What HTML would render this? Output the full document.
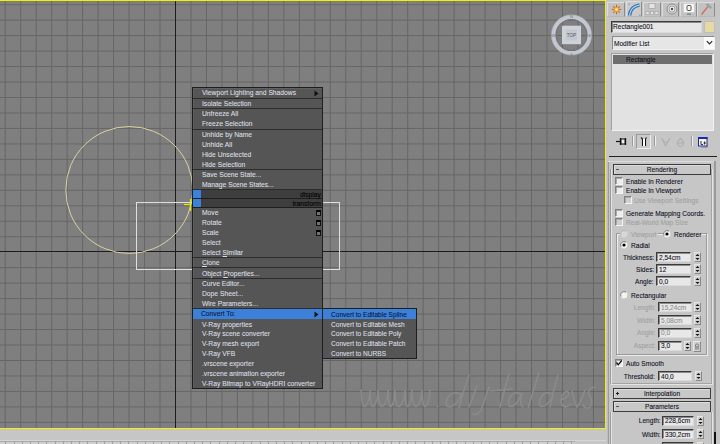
<!DOCTYPE html><html><head><meta charset="utf-8"><style>
*{margin:0;padding:0;box-sizing:border-box}
html,body{width:720px;height:444px;overflow:hidden;background:#c6c6c6}
body{position:relative;font-family:"Liberation Sans",sans-serif}
.a{position:absolute}
.t{position:absolute;white-space:pre;font-size:8px;line-height:10px;transform-origin:0 0;transform:scaleX(0.84);-webkit-text-stroke:0.1px currentColor}
.mt{color:#dcdfe2;-webkit-text-stroke:0.1px #dcdfe2}
.p{transform:scaleX(0.82)}
.sep{position:absolute;height:1px;background:#2c2c2c}
</style></head><body>

<svg class="a" style="left:0;top:0" width="605" height="428" viewBox="0 0 605 428">
<rect x="0" y="0" width="605" height="428" fill="#7f7f7f"/>
<line x1="5.22" y1="0" x2="5.22" y2="428" stroke="#676767" stroke-width="1"/>
<line x1="20.70" y1="0" x2="20.70" y2="428" stroke="#676767" stroke-width="1"/>
<line x1="36.18" y1="0" x2="36.18" y2="428" stroke="#676767" stroke-width="1"/>
<line x1="51.66" y1="0" x2="51.66" y2="428" stroke="#676767" stroke-width="1"/>
<line x1="67.14" y1="0" x2="67.14" y2="428" stroke="#676767" stroke-width="1"/>
<line x1="82.62" y1="0" x2="82.62" y2="428" stroke="#676767" stroke-width="1"/>
<line x1="98.10" y1="0" x2="98.10" y2="428" stroke="#676767" stroke-width="1"/>
<line x1="113.58" y1="0" x2="113.58" y2="428" stroke="#676767" stroke-width="1"/>
<line x1="129.06" y1="0" x2="129.06" y2="428" stroke="#676767" stroke-width="1"/>
<line x1="144.54" y1="0" x2="144.54" y2="428" stroke="#676767" stroke-width="1"/>
<line x1="160.02" y1="0" x2="160.02" y2="428" stroke="#676767" stroke-width="1"/>
<line x1="190.98" y1="0" x2="190.98" y2="428" stroke="#676767" stroke-width="1"/>
<line x1="206.46" y1="0" x2="206.46" y2="428" stroke="#676767" stroke-width="1"/>
<line x1="221.94" y1="0" x2="221.94" y2="428" stroke="#676767" stroke-width="1"/>
<line x1="237.42" y1="0" x2="237.42" y2="428" stroke="#676767" stroke-width="1"/>
<line x1="252.90" y1="0" x2="252.90" y2="428" stroke="#676767" stroke-width="1"/>
<line x1="268.38" y1="0" x2="268.38" y2="428" stroke="#676767" stroke-width="1"/>
<line x1="283.86" y1="0" x2="283.86" y2="428" stroke="#676767" stroke-width="1"/>
<line x1="299.34" y1="0" x2="299.34" y2="428" stroke="#676767" stroke-width="1"/>
<line x1="314.82" y1="0" x2="314.82" y2="428" stroke="#676767" stroke-width="1"/>
<line x1="330.30" y1="0" x2="330.30" y2="428" stroke="#676767" stroke-width="1"/>
<line x1="345.78" y1="0" x2="345.78" y2="428" stroke="#676767" stroke-width="1"/>
<line x1="361.26" y1="0" x2="361.26" y2="428" stroke="#676767" stroke-width="1"/>
<line x1="376.74" y1="0" x2="376.74" y2="428" stroke="#676767" stroke-width="1"/>
<line x1="392.22" y1="0" x2="392.22" y2="428" stroke="#676767" stroke-width="1"/>
<line x1="407.70" y1="0" x2="407.70" y2="428" stroke="#676767" stroke-width="1"/>
<line x1="423.18" y1="0" x2="423.18" y2="428" stroke="#676767" stroke-width="1"/>
<line x1="438.66" y1="0" x2="438.66" y2="428" stroke="#676767" stroke-width="1"/>
<line x1="454.14" y1="0" x2="454.14" y2="428" stroke="#676767" stroke-width="1"/>
<line x1="469.62" y1="0" x2="469.62" y2="428" stroke="#676767" stroke-width="1"/>
<line x1="485.10" y1="0" x2="485.10" y2="428" stroke="#676767" stroke-width="1"/>
<line x1="500.58" y1="0" x2="500.58" y2="428" stroke="#676767" stroke-width="1"/>
<line x1="516.06" y1="0" x2="516.06" y2="428" stroke="#676767" stroke-width="1"/>
<line x1="531.54" y1="0" x2="531.54" y2="428" stroke="#676767" stroke-width="1"/>
<line x1="547.02" y1="0" x2="547.02" y2="428" stroke="#676767" stroke-width="1"/>
<line x1="562.50" y1="0" x2="562.50" y2="428" stroke="#676767" stroke-width="1"/>
<line x1="577.98" y1="0" x2="577.98" y2="428" stroke="#676767" stroke-width="1"/>
<line x1="593.46" y1="0" x2="593.46" y2="428" stroke="#676767" stroke-width="1"/>
<line x1="0" y1="4.68" x2="605" y2="4.68" stroke="#676767" stroke-width="1"/>
<line x1="0" y1="20.15" x2="605" y2="20.15" stroke="#676767" stroke-width="1"/>
<line x1="0" y1="35.62" x2="605" y2="35.62" stroke="#676767" stroke-width="1"/>
<line x1="0" y1="51.09" x2="605" y2="51.09" stroke="#676767" stroke-width="1"/>
<line x1="0" y1="66.56" x2="605" y2="66.56" stroke="#676767" stroke-width="1"/>
<line x1="0" y1="82.03" x2="605" y2="82.03" stroke="#676767" stroke-width="1"/>
<line x1="0" y1="97.50" x2="605" y2="97.50" stroke="#676767" stroke-width="1"/>
<line x1="0" y1="112.97" x2="605" y2="112.97" stroke="#676767" stroke-width="1"/>
<line x1="0" y1="128.44" x2="605" y2="128.44" stroke="#676767" stroke-width="1"/>
<line x1="0" y1="143.91" x2="605" y2="143.91" stroke="#676767" stroke-width="1"/>
<line x1="0" y1="159.38" x2="605" y2="159.38" stroke="#676767" stroke-width="1"/>
<line x1="0" y1="174.85" x2="605" y2="174.85" stroke="#676767" stroke-width="1"/>
<line x1="0" y1="190.32" x2="605" y2="190.32" stroke="#676767" stroke-width="1"/>
<line x1="0" y1="205.79" x2="605" y2="205.79" stroke="#676767" stroke-width="1"/>
<line x1="0" y1="221.26" x2="605" y2="221.26" stroke="#676767" stroke-width="1"/>
<line x1="0" y1="236.73" x2="605" y2="236.73" stroke="#676767" stroke-width="1"/>
<line x1="0" y1="267.67" x2="605" y2="267.67" stroke="#676767" stroke-width="1"/>
<line x1="0" y1="283.14" x2="605" y2="283.14" stroke="#676767" stroke-width="1"/>
<line x1="0" y1="298.61" x2="605" y2="298.61" stroke="#676767" stroke-width="1"/>
<line x1="0" y1="314.08" x2="605" y2="314.08" stroke="#676767" stroke-width="1"/>
<line x1="0" y1="329.55" x2="605" y2="329.55" stroke="#676767" stroke-width="1"/>
<line x1="0" y1="345.02" x2="605" y2="345.02" stroke="#676767" stroke-width="1"/>
<line x1="0" y1="360.49" x2="605" y2="360.49" stroke="#676767" stroke-width="1"/>
<line x1="0" y1="375.96" x2="605" y2="375.96" stroke="#676767" stroke-width="1"/>
<line x1="0" y1="391.43" x2="605" y2="391.43" stroke="#676767" stroke-width="1"/>
<line x1="0" y1="406.90" x2="605" y2="406.90" stroke="#676767" stroke-width="1"/>
<line x1="0" y1="422.37" x2="605" y2="422.37" stroke="#676767" stroke-width="1"/>
<line x1="175.5" y1="0" x2="175.5" y2="428" stroke="#1c1c1c" stroke-width="1"/>
<line x1="0" y1="251.5" x2="605" y2="251.5" stroke="#1c1c1c" stroke-width="1"/>
<circle cx="129.3" cy="190" r="63.5" fill="none" stroke="#d9d1a0" stroke-width="1"/>
<rect x="136.5" y="202.5" width="203" height="67" fill="none" stroke="#dedede" stroke-width="1"/>
<line x1="190.5" y1="199" x2="190.5" y2="211" stroke="#e6e600" stroke-width="1.3"/>
<line x1="184" y1="204.5" x2="191" y2="204.5" stroke="#e6e600" stroke-width="1.3"/>
<g fill="none" stroke="#8b8b8b" stroke-width="1.5" stroke-linecap="round" opacity="1"><path d="M361 390 Q361.5 409 365.5 406 Q369.5 402 370 390 Q370.5 409 374.0 406 Q377.5 402 378 390 Q378.5 409 383.0 406 Q387.5 402 388 390 Q388.5 409 391.5 406 Q394.5 402 395 390 Q395.5 409 400.0 406 Q404.5 402 405 390 Q405.5 409 408.5 406 Q411.5 402 412 390 Q412.5 409 417.0 406 Q421.5 402 422 390 Q422.5 409 426.0 406 Q429.5 402 430 390"/><path d="M437 406.5 l1 0"/><path d="M461 394 Q452 390 447 399 Q444 407 450 407 Q457 405 462 394 M469 375 Q463 392 459 408"/><path d="M477 386 Q473 398 469 407 M478 378 l0.6 0"/><path d="M491 378 l0.6 0 M489 387 Q485 400 481 410 Q477 416 473 414"/><path d="M509 374 Q504 392 500 407 M490 391 Q500 390 512 389"/><path d="M521 394 Q512 390 509 400 Q507 408 513 406 Q518 403 522 393 Q519 404 523 407"/><path d="M539 373 Q533 392 528 408"/><path d="M552 394 Q543 390 540 400 Q538 408 544 406 Q550 403 553 395 M558 375 Q553 392 550 407"/><path d="M561 400 Q568 398 569 393 Q566 389 562 396 Q559 406 566 407 Q569 406 571 404"/><path d="M572 391 Q575 404 577 407 Q582 400 585 390"/><path d="M595 387 Q587 388 589 395 Q594 401 590 407 Q586 410 583 405"/></g>
</svg>
<div class="a" style="left:0;top:0;width:606px;height:1px;background:#f2f200"></div>
<div class="a" style="left:605px;top:0;width:1px;height:429px;background:#f2f200"></div>
<div class="a" style="left:0;top:428px;width:606px;height:1px;background:#f2f200"></div>
<svg class="a" style="left:546px;top:10px" width="52" height="52" viewBox="0 0 52 52">
<circle cx="25.5" cy="25" r="18.2" fill="none" stroke="#c3c7cf" stroke-width="4.2"/>
<circle cx="25.5" cy="25" r="20.2" fill="none" stroke="#9a9ea6" stroke-width="0.5"/>
<circle cx="25.5" cy="25" r="15.4" fill="none" stroke="#70747c" stroke-width="0.8"/>
<rect x="16" y="15.7" width="19" height="18.5" fill="#cdd1da"/>
<rect x="19.8" y="19.5" width="11.2" height="11" fill="#c3c7cf"/>
<text x="25.5" y="27" font-family="Liberation Sans" font-size="4.6" text-anchor="middle" fill="#5a5a5e">TOP</text>
<text x="25.5" y="8.3" font-family="Liberation Sans" font-size="4.2" text-anchor="middle" fill="#6e727a">N</text>
<text x="25.5" y="45.5" font-family="Liberation Sans" font-size="4.2" text-anchor="middle" fill="#6e727a">S</text>
<text x="7.2" y="26.5" font-family="Liberation Sans" font-size="4.2" text-anchor="middle" fill="#6e727a">W</text>
<text x="43.8" y="26.5" font-family="Liberation Sans" font-size="4.2" text-anchor="middle" fill="#6e727a">E</text>
</svg>
<div class="a" style="left:0;top:429px;width:606px;height:15px;background:#c6c6c6"></div>
<div class="a" style="left:0;top:440px;width:606px;height:1px;background:#d6d6d6"></div>
<div class="a" style="left:0;top:441px;width:575px;height:1px;background:#acacac"></div>
<div class="a" style="left:0;top:442px;width:575px;height:2px;background:#cfcfcf"></div>
<div class="a" style="left:5px;top:441px;width:1px;height:3px;background:#a0a0a0"></div><div class="a" style="left:14px;top:441px;width:1px;height:3px;background:#a0a0a0"></div><div class="a" style="left:22px;top:441px;width:1px;height:3px;background:#a0a0a0"></div><div class="a" style="left:30px;top:441px;width:1px;height:3px;background:#a0a0a0"></div><div class="a" style="left:38px;top:441px;width:1px;height:3px;background:#a0a0a0"></div><div class="a" style="left:46px;top:441px;width:1px;height:3px;background:#a0a0a0"></div><div class="a" style="left:55px;top:441px;width:1px;height:3px;background:#a0a0a0"></div><div class="a" style="left:63px;top:441px;width:1px;height:3px;background:#a0a0a0"></div><div class="a" style="left:71px;top:441px;width:1px;height:3px;background:#a0a0a0"></div><div class="a" style="left:79px;top:441px;width:1px;height:3px;background:#a0a0a0"></div><div class="a" style="left:87px;top:441px;width:1px;height:3px;background:#a0a0a0"></div><div class="a" style="left:96px;top:441px;width:1px;height:3px;background:#a0a0a0"></div><div class="a" style="left:104px;top:441px;width:1px;height:3px;background:#a0a0a0"></div><div class="a" style="left:112px;top:441px;width:1px;height:3px;background:#a0a0a0"></div><div class="a" style="left:120px;top:441px;width:1px;height:3px;background:#a0a0a0"></div><div class="a" style="left:128px;top:441px;width:1px;height:3px;background:#a0a0a0"></div><div class="a" style="left:137px;top:441px;width:1px;height:3px;background:#a0a0a0"></div><div class="a" style="left:145px;top:441px;width:1px;height:3px;background:#a0a0a0"></div><div class="a" style="left:153px;top:441px;width:1px;height:3px;background:#a0a0a0"></div><div class="a" style="left:161px;top:441px;width:1px;height:3px;background:#a0a0a0"></div><div class="a" style="left:169px;top:441px;width:1px;height:3px;background:#a0a0a0"></div><div class="a" style="left:178px;top:441px;width:1px;height:3px;background:#a0a0a0"></div><div class="a" style="left:186px;top:441px;width:1px;height:3px;background:#a0a0a0"></div><div class="a" style="left:194px;top:441px;width:1px;height:3px;background:#a0a0a0"></div><div class="a" style="left:202px;top:441px;width:1px;height:3px;background:#a0a0a0"></div><div class="a" style="left:210px;top:441px;width:1px;height:3px;background:#a0a0a0"></div><div class="a" style="left:219px;top:441px;width:1px;height:3px;background:#a0a0a0"></div><div class="a" style="left:227px;top:441px;width:1px;height:3px;background:#a0a0a0"></div><div class="a" style="left:235px;top:441px;width:1px;height:3px;background:#a0a0a0"></div><div class="a" style="left:243px;top:441px;width:1px;height:3px;background:#a0a0a0"></div><div class="a" style="left:251px;top:441px;width:1px;height:3px;background:#a0a0a0"></div><div class="a" style="left:260px;top:441px;width:1px;height:3px;background:#a0a0a0"></div><div class="a" style="left:268px;top:441px;width:1px;height:3px;background:#a0a0a0"></div><div class="a" style="left:276px;top:441px;width:1px;height:3px;background:#a0a0a0"></div><div class="a" style="left:284px;top:441px;width:1px;height:3px;background:#a0a0a0"></div><div class="a" style="left:292px;top:441px;width:1px;height:3px;background:#a0a0a0"></div><div class="a" style="left:301px;top:441px;width:1px;height:3px;background:#a0a0a0"></div><div class="a" style="left:309px;top:441px;width:1px;height:3px;background:#a0a0a0"></div><div class="a" style="left:317px;top:441px;width:1px;height:3px;background:#a0a0a0"></div><div class="a" style="left:325px;top:441px;width:1px;height:3px;background:#a0a0a0"></div><div class="a" style="left:333px;top:441px;width:1px;height:3px;background:#a0a0a0"></div><div class="a" style="left:342px;top:441px;width:1px;height:3px;background:#a0a0a0"></div><div class="a" style="left:350px;top:441px;width:1px;height:3px;background:#a0a0a0"></div><div class="a" style="left:358px;top:441px;width:1px;height:3px;background:#a0a0a0"></div><div class="a" style="left:366px;top:441px;width:1px;height:3px;background:#a0a0a0"></div><div class="a" style="left:374px;top:441px;width:1px;height:3px;background:#a0a0a0"></div><div class="a" style="left:383px;top:441px;width:1px;height:3px;background:#a0a0a0"></div><div class="a" style="left:391px;top:441px;width:1px;height:3px;background:#a0a0a0"></div><div class="a" style="left:399px;top:441px;width:1px;height:3px;background:#a0a0a0"></div><div class="a" style="left:407px;top:441px;width:1px;height:3px;background:#a0a0a0"></div><div class="a" style="left:415px;top:441px;width:1px;height:3px;background:#a0a0a0"></div><div class="a" style="left:424px;top:441px;width:1px;height:3px;background:#a0a0a0"></div><div class="a" style="left:432px;top:441px;width:1px;height:3px;background:#a0a0a0"></div><div class="a" style="left:440px;top:441px;width:1px;height:3px;background:#a0a0a0"></div><div class="a" style="left:448px;top:441px;width:1px;height:3px;background:#a0a0a0"></div><div class="a" style="left:456px;top:441px;width:1px;height:3px;background:#a0a0a0"></div><div class="a" style="left:465px;top:441px;width:1px;height:3px;background:#a0a0a0"></div><div class="a" style="left:473px;top:441px;width:1px;height:3px;background:#a0a0a0"></div><div class="a" style="left:481px;top:441px;width:1px;height:3px;background:#a0a0a0"></div><div class="a" style="left:489px;top:441px;width:1px;height:3px;background:#a0a0a0"></div><div class="a" style="left:497px;top:441px;width:1px;height:3px;background:#a0a0a0"></div><div class="a" style="left:506px;top:441px;width:1px;height:3px;background:#a0a0a0"></div><div class="a" style="left:514px;top:441px;width:1px;height:3px;background:#a0a0a0"></div><div class="a" style="left:522px;top:441px;width:1px;height:3px;background:#a0a0a0"></div><div class="a" style="left:530px;top:441px;width:1px;height:3px;background:#a0a0a0"></div><div class="a" style="left:538px;top:441px;width:1px;height:3px;background:#a0a0a0"></div><div class="a" style="left:547px;top:441px;width:1px;height:3px;background:#a0a0a0"></div><div class="a" style="left:555px;top:441px;width:1px;height:3px;background:#a0a0a0"></div><div class="a" style="left:563px;top:441px;width:1px;height:3px;background:#a0a0a0"></div><div class="a" style="left:571px;top:441px;width:1px;height:3px;background:#a0a0a0"></div>
<div class="a" style="left:192px;top:87px;width:131px;height:302px;background:#555555;border:1px solid #1e1e1e;box-shadow:inset 1px 1px 0 #616161"></div>
<div class="t mt" style="left:201.5px;top:88px">Viewport Lighting and Shadows</div>
<div class="t mt" style="left:201.5px;top:99px">Isolate Selection</div>
<div class="t mt" style="left:201.5px;top:109px">Unfreeze All</div>
<div class="t mt" style="left:201.5px;top:119px">Freeze Selection</div>
<div class="t mt" style="left:201.5px;top:130px">Unhide by Name</div>
<div class="t mt" style="left:201.5px;top:140px">Unhide All</div>
<div class="t mt" style="left:201.5px;top:150px">Hide Unselected</div>
<div class="t mt" style="left:201.5px;top:160px">Hide Selection</div>
<div class="t mt" style="left:201.5px;top:170px">Save Scene State...</div>
<div class="t mt" style="left:201.5px;top:180px">Manage Scene States...</div>
<div class="t mt" style="left:201.5px;top:208px">Move</div>
<div class="t mt" style="left:201.5px;top:218px">Rotate</div>
<div class="t mt" style="left:201.5px;top:228px">Scale</div>
<div class="t mt" style="left:201.5px;top:238px">Select</div>
<div class="t mt" style="left:201.5px;top:248px">Select <u>S</u>imilar</div>
<div class="t mt" style="left:201.5px;top:258px"><u>C</u>lone</div>
<div class="t mt" style="left:201.5px;top:269px">Object <u>P</u>roperties...</div>
<div class="t mt" style="left:201.5px;top:279px">Curve Editor...</div>
<div class="t mt" style="left:201.5px;top:289px">Dope Sheet...</div>
<div class="t mt" style="left:201.5px;top:299px">Wire Parameters...</div>
<div class="t mt" style="left:201.5px;top:320px">V-Ray properties</div>
<div class="t mt" style="left:201.5px;top:329px">V-Ray scene converter</div>
<div class="t mt" style="left:201.5px;top:339px">V-Ray mesh export</div>
<div class="t mt" style="left:201.5px;top:349px">V-Ray VFB</div>
<div class="t mt" style="left:201.5px;top:359px">.vrscene exporter</div>
<div class="t mt" style="left:201.5px;top:369px">.vrscene animation exporter</div>
<div class="t mt" style="left:201.5px;top:379px">V-Ray Bitmap to VRayHDRI converter</div>
<div class="sep" style="left:193px;top:98px;width:129px"></div>
<div class="sep" style="left:193px;top:108px;width:129px"></div>
<div class="sep" style="left:193px;top:129px;width:129px"></div>
<div class="sep" style="left:193px;top:169px;width:129px"></div>
<div class="sep" style="left:193px;top:257px;width:129px"></div>
<div class="sep" style="left:193px;top:267px;width:129px"></div>
<div class="sep" style="left:193px;top:278px;width:129px"></div>
<div class="sep" style="left:193px;top:308px;width:129px"></div>
<div class="a" style="left:193px;top:189px;width:129px;height:19px;background:#3e3e3e"></div>
<div class="sep" style="left:193px;top:189px;width:129px"></div>
<div class="sep" style="left:193px;top:198px;width:129px;background:#1e1e1e"></div>
<div class="sep" style="left:193px;top:207px;width:129px;background:#1e1e1e"></div>
<div class="a" style="left:193px;top:190px;width:8px;height:8px;background:#3b82dc"></div>
<div class="a" style="left:193px;top:199px;width:8px;height:8px;background:#3b82dc"></div>
<div class="t" style="right:399px;top:190px;color:#000;transform-origin:100% 0">display</div>
<div class="t" style="right:399px;top:199px;color:#000;transform-origin:100% 0">transform</div>
<div class="a" style="left:316px;top:210px;width:5px;height:6px;border:1px solid #111;border-top:2px solid #000;background:#707070"></div>
<div class="a" style="left:316px;top:220px;width:5px;height:6px;border:1px solid #111;border-top:2px solid #000;background:#707070"></div>
<div class="a" style="left:316px;top:230px;width:5px;height:6px;border:1px solid #111;border-top:2px solid #000;background:#707070"></div>
<div class="a" style="left:193px;top:309px;width:129px;height:10px;background:#3b80d9"></div>
<div class="t" style="left:201px;top:309px;color:#0b1a3a">Convert To:</div>
<svg class="a" style="left:314px;top:311px" width="5" height="7"><path d="M0.5 0.5 L4.5 3.5 L0.5 6.5 Z" fill="#111"/></svg>
<svg class="a" style="left:314px;top:90px" width="5" height="7"><path d="M0.5 0.5 L4.5 3.5 L0.5 6.5 Z" fill="#111"/></svg>
<div class="a" style="left:322px;top:308px;width:95px;height:51px;background:#555555;border:1px solid #1e1e1e"></div>
<div class="a" style="left:323px;top:309px;width:93px;height:10px;background:#3b80d9"></div>
<div class="t p" style="left:331px;top:310px;color:#0b1a3a">Convert to Editable Spline</div>
<div class="t mt p" style="left:331px;top:320px;">Convert to Editable Mesh</div>
<div class="t mt p" style="left:331px;top:329px;">Convert to Editable Poly</div>
<div class="t mt p" style="left:331px;top:339px;">Convert to Editable Patch</div>
<div class="t mt p" style="left:331px;top:349px;">Convert to NURBS</div>
<div class="a" style="left:606px;top:0;width:114px;height:444px;background:#c6c6c6"></div>
<div class="a" style="left:607px;top:2px;width:18px;height:15px;background:#c2c2c2;border-top:1px solid #dcdcdc;border-left:1px solid #dcdcdc;border-right:1px solid #8c8c8c;border-bottom:1px solid #b8b8b8"></div>
<div class="a" style="left:626px;top:1px;width:16px;height:16px;background:#cbcbcb;border-top:1px solid #dcdcdc;border-left:1px solid #dcdcdc;border-right:1px solid #8c8c8c;border-bottom:1px solid #b8b8b8"></div>
<div class="a" style="left:643px;top:2px;width:18px;height:15px;background:#c2c2c2;border-top:1px solid #dcdcdc;border-left:1px solid #dcdcdc;border-right:1px solid #8c8c8c;border-bottom:1px solid #b8b8b8"></div>
<div class="a" style="left:662px;top:2px;width:17px;height:15px;background:#c2c2c2;border-top:1px solid #dcdcdc;border-left:1px solid #dcdcdc;border-right:1px solid #8c8c8c;border-bottom:1px solid #b8b8b8"></div>
<div class="a" style="left:680px;top:2px;width:17px;height:15px;background:#c2c2c2;border-top:1px solid #dcdcdc;border-left:1px solid #dcdcdc;border-right:1px solid #8c8c8c;border-bottom:1px solid #b8b8b8"></div>
<div class="a" style="left:697px;top:2px;width:18px;height:15px;background:#c2c2c2;border-top:1px solid #dcdcdc;border-left:1px solid #dcdcdc;border-right:1px solid #8c8c8c;border-bottom:1px solid #b8b8b8"></div>
<svg class="a" style="left:610px;top:3px" width="13" height="13"><g stroke="#c85a30" stroke-width="1.1"><line x1="6.5" y1="1.8" x2="6.5" y2="11.2"/><line x1="1.8" y1="6.5" x2="11.2" y2="6.5"/><line x1="3.3" y1="3.3" x2="9.7" y2="9.7"/><line x1="9.7" y1="3.3" x2="3.3" y2="9.7"/></g><circle cx="6.5" cy="6.5" r="2.8" fill="#f0a020"/><circle cx="6.5" cy="6.5" r="1.3" fill="#fff8c8"/></svg>
<svg class="a" style="left:627px;top:2px" width="15" height="15"><rect x="1.5" y="1.5" width="1.5" height="1.5" fill="#9aa"/><rect x="12" y="12.5" width="1.5" height="1.5" fill="#9aa"/><path d="M2.5 13.5 Q3.5 4.5 12.5 3" fill="none" stroke="#3a78b8" stroke-width="3.6"/><path d="M2.5 13.5 Q3.5 4.5 12.5 3" fill="none" stroke="#b8dcf4" stroke-width="1.1"/></svg>
<svg class="a" style="left:645px;top:2px" width="14" height="14"><rect x="4" y="1.5" width="6" height="5" fill="#e4e4e4" stroke="#a8a8a8" stroke-width="0.8"/><rect x="1" y="9.5" width="3" height="3" fill="#e4e4e4" stroke="#a8a8a8" stroke-width="0.7"/><rect x="5.5" y="9.5" width="3" height="3" fill="#e4e4e4" stroke="#a8a8a8" stroke-width="0.7"/><rect x="10" y="9.5" width="3" height="3" fill="#e4e4e4" stroke="#a8a8a8" stroke-width="0.7"/></svg>
<svg class="a" style="left:665px;top:2px" width="14" height="14"><circle cx="7" cy="7" r="5" fill="#dcdcdc" stroke="#8a8a8a" stroke-width="1"/><circle cx="7" cy="7" r="3" fill="#f4f4f4" stroke="#8a8a8a" stroke-width="0.8"/><circle cx="7" cy="7" r="1.2" fill="#444"/></svg>
<svg class="a" style="left:682px;top:2px" width="14" height="14"><rect x="1.5" y="1.5" width="11" height="9" fill="#f6f6f6" stroke="#cfcfcf" stroke-width="0.8"/><rect x="5" y="3.5" width="4" height="5" rx="1" fill="none" stroke="#555" stroke-width="1"/><rect x="5" y="11.5" width="4" height="1.2" fill="#6a7a8a"/></svg>
<svg class="a" style="left:699px;top:2px" width="14" height="14"><line x1="2.5" y1="12.5" x2="9" y2="4.5" stroke="#d07050" stroke-width="1.3"/><path d="M6.5 2.5 L9 1.2 L13 5 L11.5 7 L8.5 4.5Z" fill="#9aa2aa"/></svg>
<div class="a" style="left:611px;top:21px;width:91px;height:12px;background:#e6e6e6;border-top:1px solid #3a3a3a;border-left:1px solid #3a3a3a;border-right:1px solid #dadada;border-bottom:1px solid #dadada;box-shadow:inset 1px 1px 0 #8c8c8c"></div>
<div class="t p" style="left:613px;top:22px;color:#0e0e24">Rectangle001</div>
<div class="a" style="left:704px;top:21px;width:11px;height:12px;background:#e6d9a2;border:1px solid #bdbdbd"></div>
<div class="a" style="left:612px;top:36px;width:103px;height:14px;background:#e6e6e6;border-top:1px solid #8a8a8a;border-left:1px solid #8a8a8a;border-bottom:1px solid #f0f0f0;border-right:1px solid #f0f0f0"></div>
<div class="a" style="left:704px;top:37px;width:10px;height:12px;background:#fafafa;"></div>
<svg class="a" style="left:706px;top:40px" width="7" height="6"><path d="M0.8 1.2 L3.5 4 L6.2 1.2" fill="none" stroke="#222" stroke-width="1.1"/></svg>
<div class="t p" style="left:614px;top:39px;color:#0e0e24">Modifier List</div>
<div class="a" style="left:611px;top:53px;width:103px;height:78px;background:#e2e2e2;border-top:1px solid #a0a0a0;border-left:1px solid #a0a0a0;border-bottom:1px solid #f2f2f2;border-right:1px solid #f2f2f2"></div>
<div class="a" style="left:613px;top:55px;width:99px;height:9px;background:#6e6e6e;"></div>
<div class="t p" style="left:626px;top:55px;color:#101020">Rectangle</div>
<svg class="a" style="left:614px;top:136px" width="14" height="12"><path d="M2 5.5 H6.5" stroke="#111" stroke-width="1.2"/><path d="M6.5 2 V9 M11.5 2 V9" stroke="#111" stroke-width="1.3"/><rect x="7" y="3" width="4" height="5" fill="#f0f0f0" stroke="#111" stroke-width="1"/></svg>
<div class="a" style="left:632px;top:136px;width:1px;height:10px;background:#9a9a9a;"></div>
<div class="a" style="left:633px;top:136px;width:1px;height:10px;background:#eeeeee;"></div>
<div class="a" style="left:636px;top:134px;width:15px;height:15px;background:#c9c9c9;border-top:1px solid #9a9a9a;border-left:1px solid #9a9a9a;border-right:1px solid #ececec;border-bottom:1px solid #ececec"></div>
<svg class="a" style="left:640px;top:137px" width="8" height="10"><path d="M1 0.5 L2.5 2 V9 M6.5 0.5 L5.5 2 V9" fill="none" stroke="#111" stroke-width="1.1"/><rect x="3" y="2" width="2" height="7" fill="#fff"/></svg>
<div class="a" style="left:654px;top:136px;width:1px;height:10px;background:#9a9a9a;"></div>
<div class="a" style="left:655px;top:136px;width:1px;height:10px;background:#eeeeee;"></div>
<svg class="a" style="left:660px;top:136px" width="26" height="12"><path d="M1.5 2 L5.5 10 L10 2 M3.5 4.5 L5.5 7 L8 4.5" fill="none" stroke="#a6a6a6" stroke-width="0.9"/><ellipse cx="20.5" cy="7" rx="3" ry="3.5" fill="none" stroke="#a6a6a6" stroke-width="0.9"/><path d="M18.5 7 H22.5 M19 3.5 Q20.5 1 22 3.5" fill="none" stroke="#a6a6a6" stroke-width="0.9"/></svg>
<div class="a" style="left:691px;top:136px;width:1px;height:10px;background:#9a9a9a;"></div>
<div class="a" style="left:692px;top:136px;width:1px;height:10px;background:#eeeeee;"></div>
<svg class="a" style="left:697px;top:136px" width="12" height="12"><rect x="1.5" y="1.5" width="8.5" height="8.5" fill="#f4f4f4" stroke="#1828b8" stroke-width="1"/><rect x="1" y="1" width="9.5" height="2" fill="#1828b8"/><path d="M4 5 V8.5 H6 M7.5 5.5 V8.5 M6.5 7 H9" fill="none" stroke="#333" stroke-width="1"/><path d="M10.5 5 V11 H4" fill="none" stroke="#777" stroke-width="1"/></svg>
<div class="a" style="left:609px;top:156px;width:108px;height:1px;background:#222;"></div>
<div class="a" style="left:608px;top:161px;width:107px;height:1px;background:#dcdcdc;"></div>
<div class="a" style="left:607px;top:162px;width:1px;height:282px;background:#bdbdbd;"></div>
<div class="a" style="left:608px;top:162px;width:1px;height:282px;background:#9c9c9c;"></div>
<div class="a" style="left:610px;top:169px;width:103px;height:216px;border-left:1px solid #9c9c9c;border-bottom:1px solid #e4e4e4;border-right:1px solid #e4e4e4;box-shadow:inset 1px 0 0 #e4e4e4, inset -1px -1px 0 #a4a4a4"></div>
<div class="a" style="left:613px;top:164px;width:98px;height:11px;background:#c8c8c8;border:1px solid #3c3c3c;box-shadow:inset 1px 1px 0 #dcdcdc"></div>
<div class="t" style="left:662px;top:165px;color:#0e0e24;transform:scaleX(0.82) translateX(-50%);transform-origin:0 0">Rendering</div>
<div class="a" style="left:616px;top:169px;width:3px;height:1px;background:#555;"></div>
<div class="a" style="left:615px;top:177px;width:8px;height:8px;background:#ececec;border-top:1px solid #808080;border-left:1px solid #808080;border-right:1px solid #f4f4f4;border-bottom:1px solid #f4f4f4;box-shadow:inset 1px 1px 0 #a8a8a8"></div>
<div class="t p" style="left:626px;top:177px;color:#0e0e24">Enable In Renderer</div>
<div class="a" style="left:615px;top:186px;width:8px;height:8px;background:#ececec;border-top:1px solid #808080;border-left:1px solid #808080;border-right:1px solid #f4f4f4;border-bottom:1px solid #f4f4f4;box-shadow:inset 1px 1px 0 #a8a8a8"></div>
<div class="t p" style="left:626px;top:186px;color:#0e0e24">Enable In Viewport</div>
<div class="a" style="left:624px;top:196px;width:8px;height:8px;background:#cfcfcf;border-top:1px solid #808080;border-left:1px solid #808080;border-right:1px solid #f4f4f4;border-bottom:1px solid #f4f4f4;box-shadow:inset 1px 1px 0 #a8a8a8"></div>
<div class="t p" style="left:634px;top:196px;color:#a0a0a0">Use Viewport Settings</div>
<div class="a" style="left:615px;top:209px;width:8px;height:8px;background:#ececec;border-top:1px solid #808080;border-left:1px solid #808080;border-right:1px solid #f4f4f4;border-bottom:1px solid #f4f4f4;box-shadow:inset 1px 1px 0 #a8a8a8"></div>
<div class="t p" style="left:626px;top:209px;color:#0e0e24">Generate Mapping Coords.</div>
<div class="a" style="left:615px;top:218px;width:8px;height:8px;background:#cfcfcf;border-top:1px solid #808080;border-left:1px solid #808080;border-right:1px solid #f4f4f4;border-bottom:1px solid #f4f4f4;box-shadow:inset 1px 1px 0 #a8a8a8"></div>
<div class="t p" style="left:626px;top:218px;color:#a0a0a0">Real-World Map Size</div>
<div class="a" style="left:616px;top:233px;width:91px;height:122px;border:1px solid #9a9a9a;box-shadow:1px 1px 0 #ececec inset, 1px 1px 0 #ececec"></div>
<div class="a" style="left:620px;top:228px;width:38px;height:10px;background:#c6c6c6;"></div>
<div class="a" style="left:663px;top:228px;width:39px;height:10px;background:#c6c6c6;"></div>
<svg class="a" style="left:620px;top:230px" width="8" height="8"><circle cx="4" cy="4" r="3.4" fill="#d8d8d8"/><path d="M1 5.5 A3.4 3.4 0 0 1 6 1.2" fill="none" stroke="#b4b4b4" stroke-width="1"/></svg>
<div class="t p" style="left:631px;top:230px;color:#a0a0a0">Viewport</div>
<svg class="a" style="left:663px;top:230px" width="8" height="8"><circle cx="4" cy="4" r="3.4" fill="#f2f2f2"/><path d="M1 5.5 A3.4 3.4 0 0 1 6 1.2" fill="none" stroke="#7a7a7a" stroke-width="1"/><circle cx="4" cy="4" r="1.6" fill="#000"/></svg>
<div class="t p" style="left:674px;top:230px;color:#0e0e24">Renderer</div>
<svg class="a" style="left:620px;top:241px" width="8" height="8"><circle cx="4" cy="4" r="3.4" fill="#f2f2f2"/><path d="M1 5.5 A3.4 3.4 0 0 1 6 1.2" fill="none" stroke="#7a7a7a" stroke-width="1"/><circle cx="4" cy="4" r="1.6" fill="#000"/></svg>
<div class="t p" style="left:631px;top:241px;color:#0e0e24">Radial</div>
<div class="t p" style="right:66px;top:253px;color:#0e0e24;transform-origin:100% 0">Thickness:</div>
<div class="a" style="left:656px;top:252px;width:35px;height:10px;background:#e8e8e8;border-top:1px solid #3a3a3a;border-left:1px solid #3a3a3a;border-right:1px solid #dadada;border-bottom:1px solid #dadada;box-shadow:inset 1px 1px 0 #8c8c8c"></div>
<div class="t p" style="left:658.5px;top:253px;color:#0e0e24">2,54cm</div>
<div class="a" style="left:694px;top:252px;width:7px;height:10px;background:#d0d0d0;border-right:1px solid #8a8a8a;border-bottom:1px solid #8a8a8a;border-top:1px solid #e6e6e6;border-left:1px solid #e6e6e6"></div>
<svg class="a" style="left:694px;top:252px" width="7" height="10"><path d="M1.5 4 L3.5 2 L5.5 4Z M1.5 6 L3.5 8 L5.5 6Z" fill="#111"/></svg>
<div class="t p" style="right:66px;top:265px;color:#0e0e24;transform-origin:100% 0">Sides:</div>
<div class="a" style="left:656px;top:264px;width:35px;height:10px;background:#e8e8e8;border-top:1px solid #3a3a3a;border-left:1px solid #3a3a3a;border-right:1px solid #dadada;border-bottom:1px solid #dadada;box-shadow:inset 1px 1px 0 #8c8c8c"></div>
<div class="t p" style="left:658.5px;top:265px;color:#0e0e24">12</div>
<div class="a" style="left:694px;top:264px;width:7px;height:10px;background:#d0d0d0;border-right:1px solid #8a8a8a;border-bottom:1px solid #8a8a8a;border-top:1px solid #e6e6e6;border-left:1px solid #e6e6e6"></div>
<svg class="a" style="left:694px;top:264px" width="7" height="10"><path d="M1.5 4 L3.5 2 L5.5 4Z M1.5 6 L3.5 8 L5.5 6Z" fill="#111"/></svg>
<div class="t p" style="right:66px;top:277px;color:#0e0e24;transform-origin:100% 0">Angle:</div>
<div class="a" style="left:656px;top:276px;width:35px;height:10px;background:#e8e8e8;border-top:1px solid #3a3a3a;border-left:1px solid #3a3a3a;border-right:1px solid #dadada;border-bottom:1px solid #dadada;box-shadow:inset 1px 1px 0 #8c8c8c"></div>
<div class="t p" style="left:658.5px;top:277px;color:#0e0e24">0,0</div>
<div class="a" style="left:694px;top:276px;width:7px;height:10px;background:#d0d0d0;border-right:1px solid #8a8a8a;border-bottom:1px solid #8a8a8a;border-top:1px solid #e6e6e6;border-left:1px solid #e6e6e6"></div>
<svg class="a" style="left:694px;top:276px" width="7" height="10"><path d="M1.5 4 L3.5 2 L5.5 4Z M1.5 6 L3.5 8 L5.5 6Z" fill="#111"/></svg>
<svg class="a" style="left:620px;top:291px" width="8" height="8"><circle cx="4" cy="4" r="3.4" fill="#f2f2f2"/><path d="M1 5.5 A3.4 3.4 0 0 1 6 1.2" fill="none" stroke="#7a7a7a" stroke-width="1"/></svg>
<div class="t p" style="left:631px;top:291px;color:#0e0e24">Rectangular</div>
<div class="t p" style="right:64px;top:303px;color:#a0a0a0;transform-origin:100% 0">Length:</div>
<div class="a" style="left:658px;top:302px;width:34px;height:10px;background:#e8e8e8;border-top:1px solid #3a3a3a;border-left:1px solid #3a3a3a;border-right:1px solid #dadada;border-bottom:1px solid #dadada;box-shadow:inset 1px 1px 0 #8c8c8c"></div>
<div class="t p" style="left:660.5px;top:303px;color:#8e8e8e">15,24cm</div>
<div class="a" style="left:694px;top:302px;width:7px;height:10px;background:#d0d0d0;border-right:1px solid #8a8a8a;border-bottom:1px solid #8a8a8a;border-top:1px solid #e6e6e6;border-left:1px solid #e6e6e6"></div>
<svg class="a" style="left:694px;top:302px" width="7" height="10"><path d="M1.5 4 L3.5 2 L5.5 4Z M1.5 6 L3.5 8 L5.5 6Z" fill="#111"/></svg>
<div class="t p" style="right:64px;top:316px;color:#a0a0a0;transform-origin:100% 0">Width:</div>
<div class="a" style="left:658px;top:315px;width:34px;height:10px;background:#e8e8e8;border-top:1px solid #3a3a3a;border-left:1px solid #3a3a3a;border-right:1px solid #dadada;border-bottom:1px solid #dadada;box-shadow:inset 1px 1px 0 #8c8c8c"></div>
<div class="t p" style="left:660.5px;top:316px;color:#8e8e8e">5,08cm</div>
<div class="a" style="left:694px;top:315px;width:7px;height:10px;background:#d0d0d0;border-right:1px solid #8a8a8a;border-bottom:1px solid #8a8a8a;border-top:1px solid #e6e6e6;border-left:1px solid #e6e6e6"></div>
<svg class="a" style="left:694px;top:315px" width="7" height="10"><path d="M1.5 4 L3.5 2 L5.5 4Z M1.5 6 L3.5 8 L5.5 6Z" fill="#111"/></svg>
<div class="t p" style="right:64px;top:328px;color:#a0a0a0;transform-origin:100% 0">Angle:</div>
<div class="a" style="left:658px;top:328px;width:34px;height:10px;background:#e8e8e8;border-top:1px solid #3a3a3a;border-left:1px solid #3a3a3a;border-right:1px solid #dadada;border-bottom:1px solid #dadada;box-shadow:inset 1px 1px 0 #8c8c8c"></div>
<div class="t p" style="left:660.5px;top:328px;color:#8e8e8e">0,0</div>
<div class="a" style="left:694px;top:328px;width:7px;height:10px;background:#d0d0d0;border-right:1px solid #8a8a8a;border-bottom:1px solid #8a8a8a;border-top:1px solid #e6e6e6;border-left:1px solid #e6e6e6"></div>
<svg class="a" style="left:694px;top:328px" width="7" height="10"><path d="M1.5 4 L3.5 2 L5.5 4Z M1.5 6 L3.5 8 L5.5 6Z" fill="#111"/></svg>
<div class="t p" style="right:64px;top:341px;color:#a0a0a0;transform-origin:100% 0">Aspect:</div>
<div class="a" style="left:658px;top:341px;width:24px;height:10px;background:#e8e8e8;border-top:1px solid #3a3a3a;border-left:1px solid #3a3a3a;border-right:1px solid #dadada;border-bottom:1px solid #dadada;box-shadow:inset 1px 1px 0 #8c8c8c"></div>
<div class="t p" style="left:660.5px;top:341px;color:#0e0e24">3,0</div>
<div class="a" style="left:684px;top:341px;width:7px;height:10px;background:#d0d0d0;border-right:1px solid #8a8a8a;border-bottom:1px solid #8a8a8a;border-top:1px solid #e6e6e6;border-left:1px solid #e6e6e6"></div>
<svg class="a" style="left:684px;top:341px" width="7" height="10"><path d="M1.5 4 L3.5 2 L5.5 4Z M1.5 6 L3.5 8 L5.5 6Z" fill="#111"/></svg>
<div class="a" style="left:693px;top:341px;width:8px;height:11px;background:#cdcdcd;border-top:1px solid #e8e8e8;border-left:1px solid #e8e8e8;border-right:1px solid #8a8a8a;border-bottom:1px solid #8a8a8a"></div>
<svg class="a" style="left:694px;top:342px" width="6" height="9"><path d="M1.5 4 V2.8 Q3 0.8 4.5 2.8 V4" fill="none" stroke="#777" stroke-width="0.9"/><rect x="1" y="4" width="4" height="3.5" fill="#999"/></svg>
<div class="a" style="left:615px;top:359px;width:8px;height:8px;background:#ececec;border-top:1px solid #808080;border-left:1px solid #808080;border-right:1px solid #f4f4f4;border-bottom:1px solid #f4f4f4;box-shadow:inset 1px 1px 0 #a8a8a8"></div>
<svg class="a" style="left:615px;top:359px" width="8" height="8"><path d="M1.5 3.5 L3.2 5.8 L6.8 1.5" fill="none" stroke="#111" stroke-width="1.3"/></svg>
<div class="t p" style="left:626px;top:359px;color:#0e0e24">Auto Smooth</div>
<div class="t p" style="right:65px;top:372px;color:#0e0e24;transform-origin:100% 0">Threshold:</div>
<div class="a" style="left:658px;top:371px;width:34px;height:10px;background:#e8e8e8;border-top:1px solid #3a3a3a;border-left:1px solid #3a3a3a;border-right:1px solid #dadada;border-bottom:1px solid #dadada;box-shadow:inset 1px 1px 0 #8c8c8c"></div>
<div class="t p" style="left:660.5px;top:372px;color:#0e0e24">40,0</div>
<div class="a" style="left:695px;top:371px;width:7px;height:10px;background:#d0d0d0;border-right:1px solid #8a8a8a;border-bottom:1px solid #8a8a8a;border-top:1px solid #e6e6e6;border-left:1px solid #e6e6e6"></div>
<svg class="a" style="left:695px;top:371px" width="7" height="10"><path d="M1.5 4 L3.5 2 L5.5 4Z M1.5 6 L3.5 8 L5.5 6Z" fill="#111"/></svg>
<div class="a" style="left:613px;top:388px;width:98px;height:11px;background:#c8c8c8;border:1px solid #3c3c3c;box-shadow:inset 1px 1px 0 #dcdcdc"></div>
<div class="t" style="left:662px;top:389px;color:#0e0e24;transform:scaleX(0.82) translateX(-50%);transform-origin:0 0">Interpolation</div>
<div class="a" style="left:616px;top:393px;width:3px;height:1px;background:#222;"></div>
<div class="a" style="left:617px;top:392px;width:1px;height:3px;background:#222;"></div>
<div class="a" style="left:613px;top:401px;width:98px;height:11px;background:#c8c8c8;border:1px solid #3c3c3c;box-shadow:inset 1px 1px 0 #dcdcdc"></div>
<div class="t" style="left:662px;top:402px;color:#0e0e24;transform:scaleX(0.82) translateX(-50%);transform-origin:0 0">Parameters</div>
<div class="a" style="left:616px;top:406px;width:3px;height:1px;background:#555;"></div>
<div class="a" style="left:610px;top:412px;width:103px;height:40px;border-left:1px solid #9c9c9c;border-right:1px solid #e4e4e4;box-shadow:inset 1px 0 0 #e4e4e4, inset -1px 0 0 #a4a4a4"></div>
<div class="t p" style="right:59px;top:416px;color:#0e0e24;transform-origin:100% 0">Length:</div>
<div class="a" style="left:662px;top:416px;width:32px;height:10px;background:#e8e8e8;border-top:1px solid #3a3a3a;border-left:1px solid #3a3a3a;border-right:1px solid #dadada;border-bottom:1px solid #dadada;box-shadow:inset 1px 1px 0 #8c8c8c"></div>
<div class="t p" style="left:664.5px;top:416px;color:#0e0e24">228,6cm</div>
<div class="a" style="left:697px;top:416px;width:7px;height:10px;background:#d0d0d0;border-right:1px solid #8a8a8a;border-bottom:1px solid #8a8a8a;border-top:1px solid #e6e6e6;border-left:1px solid #e6e6e6"></div>
<svg class="a" style="left:697px;top:416px" width="7" height="10"><path d="M1.5 4 L3.5 2 L5.5 4Z M1.5 6 L3.5 8 L5.5 6Z" fill="#111"/></svg>
<div class="t p" style="right:59px;top:430px;color:#0e0e24;transform-origin:100% 0">Width:</div>
<div class="a" style="left:662px;top:429px;width:32px;height:10px;background:#e8e8e8;border-top:1px solid #3a3a3a;border-left:1px solid #3a3a3a;border-right:1px solid #dadada;border-bottom:1px solid #dadada;box-shadow:inset 1px 1px 0 #8c8c8c"></div>
<div class="t p" style="left:664.5px;top:430px;color:#0e0e24">330,2cm</div>
<div class="a" style="left:697px;top:429px;width:7px;height:10px;background:#d0d0d0;border-right:1px solid #8a8a8a;border-bottom:1px solid #8a8a8a;border-top:1px solid #e6e6e6;border-left:1px solid #e6e6e6"></div>
<svg class="a" style="left:697px;top:429px" width="7" height="10"><path d="M1.5 4 L3.5 2 L5.5 4Z M1.5 6 L3.5 8 L5.5 6Z" fill="#111"/></svg>
<div class="a" style="left:662px;top:442px;width:32px;height:10px;background:#e8e8e8;border-top:1px solid #3a3a3a;border-left:1px solid #3a3a3a;border-right:1px solid #dadada;border-bottom:1px solid #dadada;box-shadow:inset 1px 1px 0 #8c8c8c"></div>
<div class="t p" style="right:59px;top:444px;color:#0e0e24;transform-origin:100% 0">Angle:</div>
<div class="a" style="left:697px;top:442px;width:7px;height:10px;background:#d0d0d0;border-right:1px solid #8a8a8a;border-bottom:1px solid #8a8a8a;border-top:1px solid #e6e6e6;border-left:1px solid #e6e6e6"></div>
<svg class="a" style="left:697px;top:442px" width="7" height="10"><path d="M1.5 4 L3.5 2 L5.5 4Z M1.5 6 L3.5 8 L5.5 6Z" fill="#111"/></svg>
<div class="a" style="left:714px;top:161px;width:2px;height:283px;background:#9a9a9a;"></div>
<div class="a" style="left:714px;top:432px;width:2px;height:12px;background:#111;"></div>
</body></html>
